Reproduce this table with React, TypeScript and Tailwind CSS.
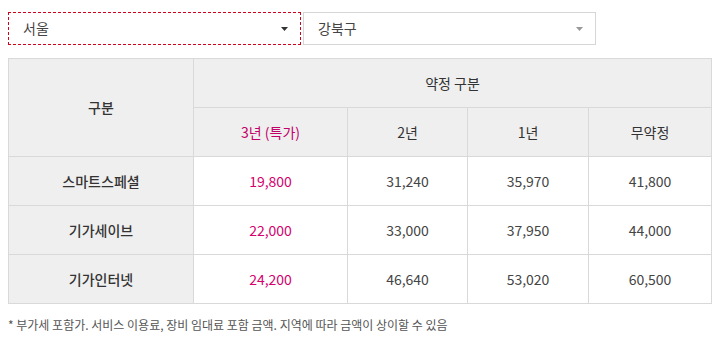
import React from 'react';

const font = { fontFamily: '"Noto Sans CJK KR", "Noto Sans", sans-serif' };

interface Plan {
  name: string;
  prices: string[];
}

const plans: Plan[] = [
  { name: '스마트스페셜', prices: ['19,800', '31,240', '35,970', '41,800'] },
  { name: '기가세이브', prices: ['22,000', '33,000', '37,950', '44,000'] },
  { name: '기가인터넷', prices: ['24,200', '46,640', '53,020', '60,500'] },
];

const Caret: React.FC<{ className: string }> = ({ className }) => (
  <svg width="7" height="4" viewBox="0 0 7 4" className={className}>
    <path d="M0 0h7L3.5 4z" fill="currentColor" />
  </svg>
);

const App: React.FC = () => {
  return (
    <div className="w-[720px] h-[340px] bg-white px-2 pt-3 text-[#333]" style={font}>
      <div className="flex gap-[2px]">
        <div className="w-[293px] h-[33px] border border-dashed border-[#d0021b] flex items-center justify-between pl-[14px] pr-[12px] text-[14px] text-[#444]">
          <span>서울</span>
          <Caret className="text-[#333]" />
        </div>
        <div className="w-[293px] h-[33px] border border-[#d6d6d6] flex items-center justify-between pl-[14px] pr-[12px] text-[14px] text-[#444]">
          <span>강북구</span>
          <Caret className="text-[#999]" />
        </div>
      </div>

      <table className="mt-[13px] border-collapse text-[14px] text-center">
        <colgroup>
          <col className="w-[185px]" />
          <col className="w-[154px]" />
          <col className="w-[120px]" />
          <col className="w-[121px]" />
          <col className="w-[123px]" />
        </colgroup>
        <thead>
          <tr className="h-[49px]">
            <th rowSpan={2} className="border border-[#d9d9d9] bg-[#efefef] font-medium text-[#333]">
              구분
            </th>
            <th colSpan={4} className="border border-[#d9d9d9] bg-[#efefef] font-normal text-[#333]">
              약정 구분
            </th>
          </tr>
          <tr className="h-[49px]">
            <th className="border border-[#d9d9d9] bg-[#efefef] font-normal text-[#c2006a]">3년 (특가)</th>
            <th className="border border-[#d9d9d9] bg-[#efefef] font-normal text-[#333]">2년</th>
            <th className="border border-[#d9d9d9] bg-[#efefef] font-normal text-[#333]">1년</th>
            <th className="border border-[#d9d9d9] bg-[#efefef] font-normal text-[#333]">무약정</th>
          </tr>
        </thead>
        <tbody>
          {plans.map((plan) => (
            <tr key={plan.name} className="h-[49px]">
              <td className="border border-[#d9d9d9] bg-[#efefef] font-medium text-[#333]">{plan.name}</td>
              {plan.prices.map((price, i) => (
                <td
                  key={i}
                  className={`border border-[#d9d9d9] ${i === 0 ? 'text-[#d4006e]' : 'text-[#444]'}`}
                >
                  {price}
                </td>
              ))}
            </tr>
          ))}
        </tbody>
      </table>

      <p className="mt-[12px] text-[12px] text-[#555]">
        * 부가세 포함가. 서비스 이용료, 장비 임대료 포함 금액. 지역에 따라 금액이 상이할 수 있음
      </p>
    </div>
  );
};

export default App;
